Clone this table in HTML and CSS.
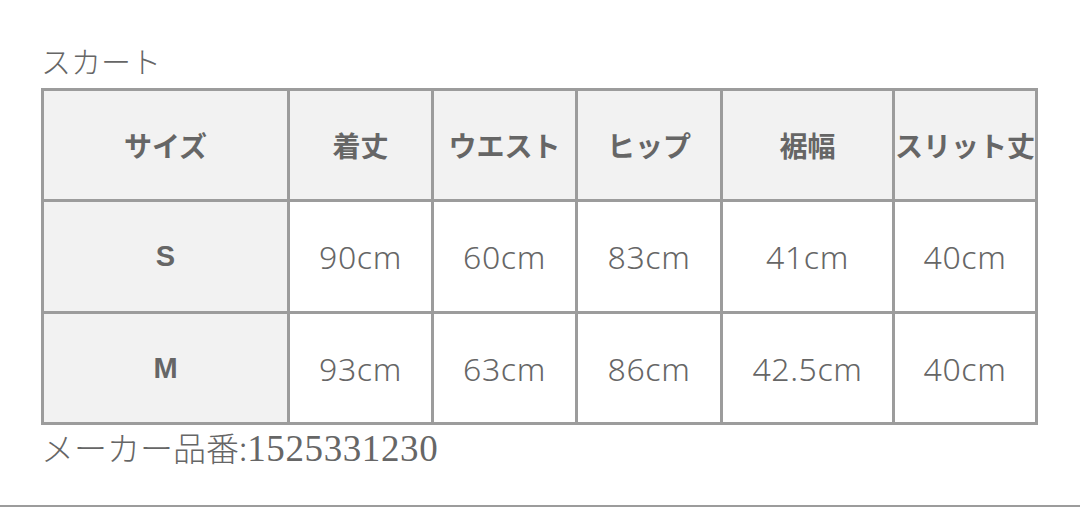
FILE: index.html
```html
<!DOCTYPE html>
<html lang="ja">
<head>
<meta charset="utf-8">
<title>スカート</title>
<link rel="stylesheet" href="styles.css">
</head>
<body>
<div class="page">
  <div class="content">
    <h2 class="title">スカート</h2>
    <div class="size-table" role="table">
      <div class="cell head" role="columnheader">サイズ</div>
      <div class="cell head" role="columnheader">着丈</div>
      <div class="cell head" role="columnheader">ウエスト</div>
      <div class="cell head" role="columnheader">ヒップ</div>
      <div class="cell head" role="columnheader">裾幅</div>
      <div class="cell head" role="columnheader">スリット丈</div>

      <div class="cell size" role="rowheader">S</div>
      <div class="cell val" role="cell">90cm</div>
      <div class="cell val" role="cell">60cm</div>
      <div class="cell val" role="cell">83cm</div>
      <div class="cell val" role="cell">41cm</div>
      <div class="cell val" role="cell">40cm</div>

      <div class="cell size" role="rowheader">M</div>
      <div class="cell val" role="cell">93cm</div>
      <div class="cell val" role="cell">63cm</div>
      <div class="cell val" role="cell">86cm</div>
      <div class="cell val" role="cell">42.5cm</div>
      <div class="cell val" role="cell">40cm</div>
    </div>
    <p class="code"><span class="code-label">メーカー品番:</span><span class="code-num">1525331230</span></p>
  </div>
  <div class="rule"></div>
</div>
</body>
</html>
```

FILE: styles.css
```css
html, body {
  margin: 0;
  padding: 0;
  background: #ffffff;
}

.page {
  height: 507px;
  display: flex;
  flex-direction: column;
  font-family: "Noto Sans CJK JP", "Noto Sans", sans-serif;
  color: #666666;
}

.content {
  padding-left: 41px;
}

.title {
  margin: 0;
  padding-top: 40px;
  height: 40px;
  line-height: 40px;
  font-size: 30px;
  font-weight: 300;
  color: #666666;
}

.size-table {
  margin-top: 8px;
  display: grid;
  grid-template-columns: 243px 141px 141px 142px 169px 140px;
  grid-template-rows: 108px 109px 108px;
  gap: 3px;
  padding: 3px;
  width: max-content;
  background: #9c9c9c;
}

.cell {
  display: flex;
  align-items: center;
  justify-content: center;
  background: #ffffff;
  white-space: nowrap;
  overflow: visible;
}

.head {
  background: #f2f2f2;
  font-size: 28px;
  font-weight: 700;
  color: #666666;
}

.size {
  background: #f2f2f2;
  font-family: "Liberation Sans", sans-serif;
  font-size: 29px;
  font-weight: 700;
  color: #666666;
}

.val {
  font-family: "Noto Sans", sans-serif;
  font-size: 32px;
  font-weight: 300;
  letter-spacing: 0.6px;
  color: #666666;
}

.code {
  margin: 0;
  height: 44px;
  line-height: 44px;
  display: flex;
  align-items: baseline;
}

.code-label {
  font-size: 33px;
  font-weight: 300;
}

.code-num {
  font-family: "Liberation Serif", serif;
  font-size: 37px;
  letter-spacing: 0.6px;
}

.rule {
  margin-top: auto;
  height: 2px;
  background: #9c9c9c;
}
```
